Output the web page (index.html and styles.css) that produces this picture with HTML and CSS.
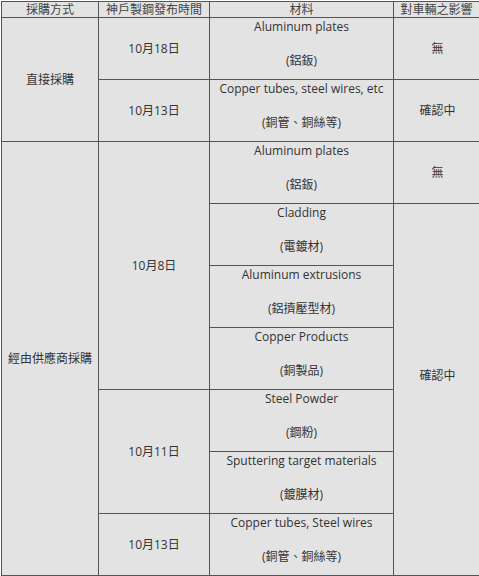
FILE: index.html
```html
<!DOCTYPE html>
<html lang="zh-Hant">
<head>
<meta charset="utf-8">
<link rel="stylesheet" href="styles.css">
</head>
<body>
<table class="impact">
  <colgroup>
    <col class="c1"><col class="c2"><col class="c3"><col class="c4">
  </colgroup>
  <thead>
    <tr class="head">
      <th>採購方式</th>
      <th>神戶製鋼發布時間</th>
      <th>材料</th>
      <th>對車輛之影響</th>
    </tr>
  </thead>
  <tbody>
    <tr>
      <td rowspan="2" class="mid">直接採購</td>
      <td class="mid">10月18日</td>
      <td class="mat">Aluminum plates<br><br>(鋁鈑)</td>
      <td class="mid">無</td>
    </tr>
    <tr>
      <td class="mid">10月13日</td>
      <td class="mat">Copper tubes, steel wires, etc<br><br>(銅管、銅絲等)</td>
      <td class="mid">確認中</td>
    </tr>
    <tr>
      <td rowspan="7" class="mid">經由供應商採購</td>
      <td rowspan="4" class="mid">10月8日</td>
      <td class="mat">Aluminum plates<br><br>(鋁鈑)</td>
      <td class="mid">無</td>
    </tr>
    <tr>
      <td class="mat">Cladding<br><br>(電鍍材)</td>
      <td rowspan="6" class="mid confirm">確認中</td>
    </tr>
    <tr>
      <td class="mat">Aluminum extrusions<br><br>(鋁擠壓型材)</td>
    </tr>
    <tr>
      <td class="mat">Copper Products<br><br>(銅製品)</td>
    </tr>
    <tr>
      <td rowspan="2" class="mid">10月11日</td>
      <td class="mat">Steel Powder<br><br>(鋼粉)</td>
    </tr>
    <tr>
      <td class="mat">Sputtering target materials<br><br>(鍍膜材)</td>
    </tr>
    <tr>
      <td class="mid">10月13日</td>
      <td class="mat">Copper tubes, Steel wires<br><br>(銅管、銅絲等)</td>
    </tr>
  </tbody>
</table>
</body>
</html>
```
FILE: styles.css
```css
html, body {
  margin: 0;
  padding: 0;
  background: #ffffff;
}
body {
  padding: 1px 0 0 1px;
  font-family: "Open Sans", "Noto Sans CJK TC", sans-serif;
  font-size: 12px;
  color: #333333;
  overflow: hidden;
}
.impact {
  border-collapse: collapse;
  table-layout: fixed;
  width: 480px;
  background: #e3e3e3;
}
.c1 { width: 97px; }
.c2 { width: 111px; }
.c3 { width: 184px; }
.c4 { width: 88px; }
.impact th,
.impact td {
  border: 1px solid #555555;
  padding: 0;
  text-align: center;
  white-space: nowrap;
  overflow: hidden;
}
.impact th {
  font-weight: normal;
  height: 15px;
  line-height: 15px;
  color: #444444;
}
.impact td {
  height: 61px;
  line-height: 17px;
}
.impact td.mid {
  vertical-align: middle;
}
.impact td.mat {
  vertical-align: top;
}
.impact td.confirm {
  padding-bottom: 28px;
}
.impact th:last-child,
.impact td.c4cell {
  padding-right: 2px;
}
```
